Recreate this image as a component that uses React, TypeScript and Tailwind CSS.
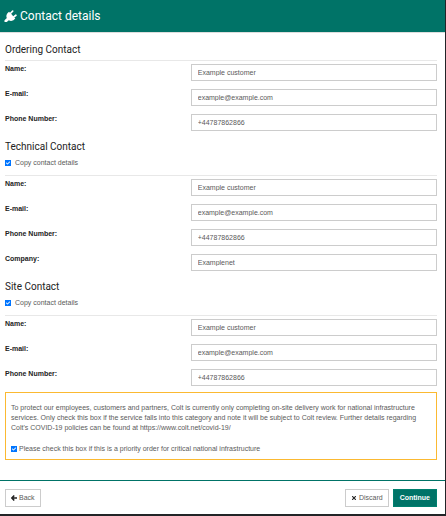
import { useId } from 'react'
import { FaCheck, FaTimes } from 'react-icons/fa'

interface Field {
  label: string
  value: string
  type?: string
}

const contactFields: Field[] = [
  { label: 'Name:', value: 'Example customer' },
  { label: 'E-mail:', value: 'example@example.com', type: 'email' },
  { label: 'Phone Number:', value: '+44787862866', type: 'tel' },
]

const technicalFields: Field[] = [
  ...contactFields,
  { label: 'Company:', value: 'Examplenet' },
]

export default function App() {
  return (
    <div className="w-full border-r border-b-2 border-[#222427] bg-white font-['Liberation_Sans',Arial,sans-serif] text-[7px] leading-[10px] text-[#5a5a5a]">
      <header className="flex h-[33px] items-center gap-[3px] border-b border-[#ddd] bg-[#007367] px-1 text-white">
        <PlugIcon />
        <h1 className="font-['Roboto',sans-serif] text-[12px] leading-[16px]">Contact details</h1>
      </header>

      <form onSubmit={(e) => e.preventDefault()}>
        <div className="pt-px pr-2 pl-[5px]">
          <ContactSection title="Ordering Contact" fields={contactFields} />
          <ContactSection title="Technical Contact" fields={technicalFields} copyable />
          <ContactSection title="Site Contact" fields={contactFields} copyable />

          <div className="mt-[6px] border border-[#fbb931] px-[5px] pt-[10px] pb-[5px]">
            <p>
              To protect our employees, customers and partners, Colt is currently only completing on-site delivery work for national infrastructure
              services. Only check this box if the service falls into this category and note it will be subject to Colt review. Further details regarding
              Colt&apos;s COVID-19 policies can be found at https://www.colt.net/covid-19/
            </p>
            <label className="mt-[11px] flex items-center gap-[2px]">
              <Checkbox />
              Please check this box if this is a priority order for critical national infrastructure
            </label>
          </div>
        </div>

        <footer className="mt-5 flex justify-between border-t border-[#007367] pt-2 pr-2 pb-[7px] pl-[5px]">
          <button type="button" className="flex h-[18px] items-center gap-[2px] border border-[#ccc] px-[5px]">
            <ArrowLeftIcon />
            Back
          </button>
          <div className="flex gap-1">
            <button type="button" className="flex h-[18px] items-center gap-[2px] border border-[#ccc] px-[5px]">
              <FaTimes className="size-[6px] text-[#222]" />
              Discard
            </button>
            <button type="submit" className="h-[18px] border border-[#00806f] bg-[#007367] px-[6px] font-bold text-white">
              Continue
            </button>
          </div>
        </footer>
      </form>
    </div>
  )
}

function ContactSection({ title, fields, copyable }: { title: string; fields: Field[]; copyable?: boolean }) {
  return (
    <section className="pt-[9px]">
      <div className="border-b border-[#e8e8e8] pb-[3px]">
        <h2 className="font-['Roboto',sans-serif] text-[10px] leading-[14px] text-[#222]">{title}</h2>
        {copyable && (
          <label className="flex h-[18px] items-center gap-1">
            <Checkbox />
            Copy contact details
          </label>
        )}
      </div>
      <div className="flex flex-col gap-2 pt-[3px]">
        {fields.map((field) => (
          <FieldRow key={field.label} {...field} />
        ))}
      </div>
    </section>
  )
}

function FieldRow({ label, value, type = 'text' }: Field) {
  const id = useId()

  return (
    <div className="flex items-start">
      <label htmlFor={id} className="w-[43%] font-bold text-[#222]">{label}</label>
      <input
        id={id}
        type={type}
        defaultValue={value}
        className="h-[17px] min-w-0 flex-1 border border-[#ccc] px-[6px] text-[#5a5a5a]"
      />
    </div>
  )
}

function Checkbox() {
  return (
    <span className="relative block size-[6px]">
      <input
        type="checkbox"
        defaultChecked
        className="peer block size-[6px] appearance-none border border-[#767676] bg-white checked:border-[#0075ff] checked:bg-[#0075ff]"
      />
      <FaCheck className="pointer-events-none absolute inset-px hidden size-1 text-white peer-checked:block" />
    </span>
  )
}

function ArrowLeftIcon() {
  return (
    <svg viewBox="0 0 12 12" className="size-[6px] text-[#222]" fill="none" stroke="currentColor" strokeWidth="3" aria-hidden="true">
      <path d="M6.500 1 1.800 6l4.700 5M2 6h10" />
    </svg>
  )
}

// plug lying diagonally: prongs to the upper right, cord to the lower left
function PlugIcon() {
  return (
    <svg viewBox="0 0 26 26" className="size-[13px]" fill="currentColor" aria-hidden="true">
      <path d="M25 9.500a1.600 1.600 0 0 1 0 2.300L20.700 15l1.900 1.900-2.200 2.200c-3.400 3.400-7.300 3.400-10.700 1.600L5.500 24H1v-3.500l4.700-4.300C4 13 4.500 9 7.900 5.600l2.200-2.200L12 5.300 16.200 1a1.600 1.600 0 0 1 2.300 2.300l-4.200 4.300 4.100 4.800 4.300-3.200a1.600 1.600 0 0 1 2.300.3z" />
    </svg>
  )
}
